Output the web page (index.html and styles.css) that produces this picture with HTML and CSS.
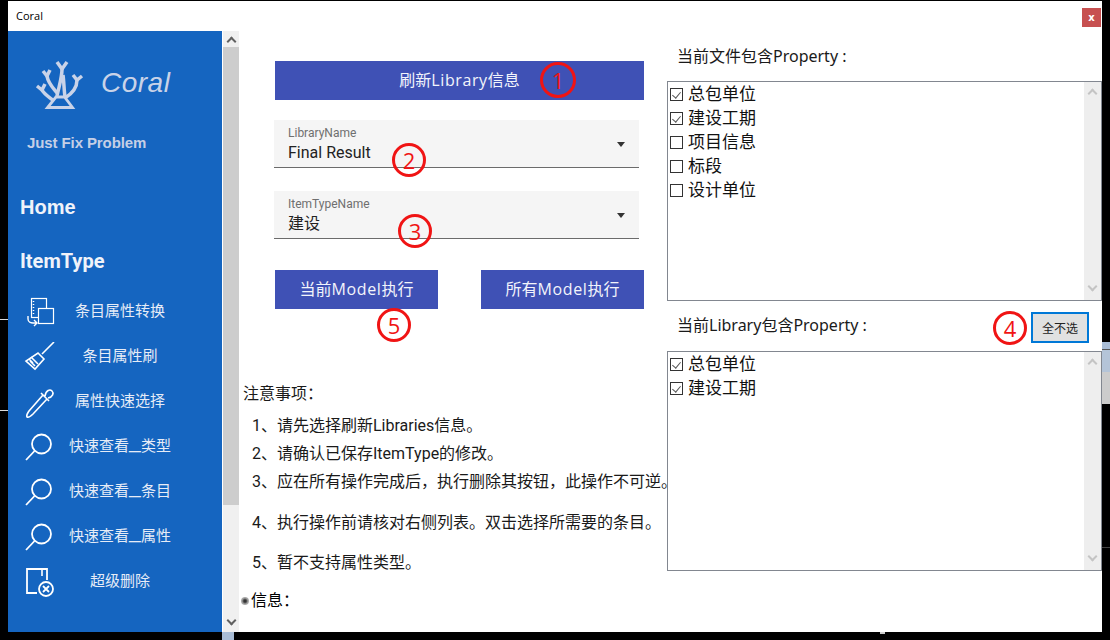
FILE: index.html
```html
<!doctype html>
<html lang="en">
<head>
	<meta charset="UTF-8">
	<title>Coral</title>
	<link rel="stylesheet" href="styles.css">
</head>
<body>
	<!-- bits of the desktop behind the window -->
	<div class="desk desk-line-a"></div>
	<div class="desk desk-line-b"></div>
	<div class="desk desk-line-c"></div>
	<div class="desk desk-panel"></div>
	<div class="desk desk-tab"></div>
	<div class="desk desk-dot"></div>

	<div class="window">
		<div class="titlebar">
			<span class="window-title">Coral</span>
			<button class="close-btn">x</button>
		</div>
		<div class="window-body">
			<!-- left menu -->
			<div class="sidebar">
				<div class="logo">
					<svg class="logo-icon" viewBox="0 0 50 50" fill="none" stroke="#c9d3e8" stroke-width="3.5">
						<path d="M22 2 27 9 32 2"/>
						<path d="M27 9C27 18 24 26 22 36"/>
						<path d="M28 15C29 22 29 30 30 37"/>
						<path d="M12.5 47.5H37.5L29.5 37H21Z" stroke-width="2.8"/>
						<path d="M8 11 12 16 15 10"/>
						<path d="M12 16C13 23 18 28 22 33"/>
						<path d="M2 26 7 30 10 24"/>
						<path d="M7 30C9 34 14 37 19 41"/>
						<path d="M38 15 42 20 47 16"/>
						<path d="M42 20C42 28 38 33 30 38"/>
					</svg>
					<span class="logo-text">Coral</span>
				</div>
				<div class="slogan">Just Fix Problem</div>
				<div class="nav-head nav-home">Home</div>
				<div class="nav-head nav-itemtype">ItemType</div>
				<ul class="nav-list">
					<li class="nav-item">
						<svg class="nav-icon" viewBox="0 0 32 32" fill="none" stroke="#fff" stroke-width="1.2">
							<rect x="8.5" y="1.5" width="15" height="19"/>
							<rect x="15.5" y="11.5" width="15" height="15" fill="#1565c0"/>
							<path d="M10.5 4v1M10.5 7v1M10.5 10v1M10.5 13v1M10.5 16v1" stroke-width="1.5"/>
							<path d="M5 19v3c0 3 3 4 5 4h4M11 23l3 3-3 3" stroke-width="1.4"/>
						</svg>
						<span class="nav-text">条目属性转换</span>
					</li>
					<li class="nav-item">
						<svg class="nav-icon" viewBox="0 0 32 32" fill="none" stroke="#fff" stroke-width="1.6">
							<path d="M31 0 19 12"/>
							<path d="M15 11 21 17 12 27 3 19Z"/>
							<path d="M8 15 15 22M12 24 7 19M6 17 10 21"/>
						</svg>
						<span class="nav-text">条目属性刷</span>
					</li>
					<li class="nav-item">
						<svg class="nav-icon" viewBox="0 0 32 32" fill="none" stroke="#fff" stroke-width="1.6">
							<path d="M20 8 6 24C4 27 3 28 4 30 6 31 8 29 10 27L24 12"/>
							<path d="M18 6 26 14M22 9C23 3 27 2 29 4 31 6 30 10 25 11"/>
						</svg>
						<span class="nav-text">属性快速选择</span>
					</li>
					<li class="nav-item">
						<svg class="nav-icon" viewBox="0 0 32 32" fill="none" stroke="#fff" stroke-width="1.8">
							<circle cx="18.5" cy="12" r="9.5"/>
							<path d="M11.5 19 3 28"/>
						</svg>
						<span class="nav-text">快速查看<span class="under">_</span>类型</span>
					</li>
					<li class="nav-item">
						<svg class="nav-icon" viewBox="0 0 32 32" fill="none" stroke="#fff" stroke-width="1.8">
							<circle cx="18.5" cy="12" r="9.5"/>
							<path d="M11.5 19 3 28"/>
						</svg>
						<span class="nav-text">快速查看<span class="under">_</span>条目</span>
					</li>
					<li class="nav-item">
						<svg class="nav-icon" viewBox="0 0 32 32" fill="none" stroke="#fff" stroke-width="1.8">
							<circle cx="18.5" cy="12" r="9.5"/>
							<path d="M11.5 19 3 28"/>
						</svg>
						<span class="nav-text">快速查看<span class="under">_</span>属性</span>
					</li>
					<li class="nav-item">
						<svg class="nav-icon" viewBox="0 0 32 32" fill="none" stroke="#fff" stroke-width="1.8">
							<path d="M14 26H4V2H24V13"/>
							<path d="M19 2V9" stroke-width="1.6"/>
							<circle cx="23" cy="22" r="7" fill="#1565c0"/>
							<path d="M20 19 26 25M26 19 20 25"/>
						</svg>
						<span class="nav-text">超级删除</span>
					</li>
				</ul>
			</div>

			<div class="scrollbar">
				<span class="arrow arrow-up"></span>
				<div class="thumb"></div>
				<span class="arrow arrow-down"></span>
			</div>

			<!-- actions -->
			<div class="main">
				<div class="actions">
					<button class="btn btn-refresh">刷新<span class="latin">Library</span>信息<span class="mark mark-1">1</span></button>
					<div class="select select-first">
						<div class="select-label">LibraryName</div>
						<div class="select-value">Final Result</div>
						<span class="select-caret"></span>
						<span class="mark mark-2">2</span>
					</div>
					<div class="select select-second">
						<div class="select-label">ItemTypeName</div>
						<div class="select-value">建设</div>
						<span class="select-caret"></span>
						<span class="mark mark-3">3</span>
					</div>
					<div class="btn-row">
						<button class="btn btn-run">当前<span class="latin">Model</span>执行<span class="mark mark-5">5</span></button>
						<button class="btn btn-run">所有<span class="latin">Model</span>执行</button>
					</div>
				</div>

				<div class="notes">
					<p class="notes-title">注意事项：</p>
					<p class="note note-1">1、请先选择刷新Libraries信息。</p>
					<p class="note note-2">2、请确认已保存ItemType的修改。</p>
					<p class="note note-3">3、应在所有操作完成后，执行删除其按钮，此操作不可逆。</p>
					<p class="note note-4">4、执行操作前请核对右侧列表。双击选择所需要的条目。</p>
					<p class="note note-5">5、暂不支持属性类型。</p>
					<p class="info"><span class="info-dot"></span>信息：</p>
				</div>
			</div>

			<!-- property lists -->
			<div class="props">
				<div class="props-head props-head-first">当前文件包含Property :</div>
				<div class="listbox">
					<ul class="check-list">
						<li><span class="check on"></span>总包单位</li>
						<li><span class="check on"></span>建设工期</li>
						<li><span class="check"></span>项目信息</li>
						<li><span class="check"></span>标段</li>
						<li><span class="check"></span>设计单位</li>
					</ul>
					<div class="list-scroll">
						<span class="arrow arrow-up arrow-light"></span>
						<span class="arrow arrow-down arrow-light"></span>
					</div>
				</div>
				<div class="props-head props-head-second">
					<span>当前Library包含Property :</span>
					<span class="mark mark-4">4</span>
					<button class="none-btn">全不选</button>
				</div>
				<div class="listbox">
					<ul class="check-list">
						<li><span class="check on"></span>总包单位</li>
						<li><span class="check on"></span>建设工期</li>
					</ul>
					<div class="list-scroll">
						<span class="arrow arrow-up arrow-light"></span>
						<span class="arrow arrow-down arrow-light"></span>
					</div>
				</div>
			</div>
		</div>
	</div>
</body>
</html>
```

FILE: styles.css
```css
*{
	padding: 0;
	margin: 0;
	box-sizing: border-box;
}
html, body{
	height: 640px;
	overflow: hidden;
}
body{
	background-color: #000;
	font-family: "Roboto", "Noto Sans CJK SC", sans-serif;
	color: #1a1a1a;
}
ul{
	list-style: none;
}

/* desktop showing around the window */
.desk{
	position: absolute;
}
.desk-line-a{
	left: 0;
	top: 319px;
	width: 8px;
	height: 1px;
	background-color: #ddd;
}
.desk-line-b{
	left: 0;
	top: 410px;
	width: 8px;
	height: 1px;
	background-color: #ddd;
}
.desk-line-c{
	left: 1102px;
	top: 547px;
	width: 8px;
	height: 1px;
	background-color: #444;
}
.desk-panel{
	left: 1102px;
	top: 342px;
	width: 8px;
	height: 62px;
	background: linear-gradient(#a9bdd6 0 7px, #555 7px 8px, #b4c4d8 8px 30px, #ccc 30px 100%);
}
.desk-tab{
	left: 222px;
	top: 632px;
	width: 12px;
	height: 8px;
	background-color: #a9bdd6;
}
.desk-dot{
	left: 880px;
	top: 632px;
	width: 5px;
	height: 2px;
	background-color: #ccc;
}

.window{
	position: relative;
	width: 1094px;
	height: 631px;
	margin: 1px 0 0 8px;
	background-color: #fff;
	display: flex;
	flex-direction: column;
}
.titlebar{
	height: 30px;
	display: flex;
	align-items: flex-start;
	justify-content: space-between;
}
.window-title{
	font-family: "Open Sans", sans-serif;
	font-size: 11px;
	color: #000;
	margin: 7px 0 0 8px;
}
.close-btn{
	width: 19px;
	height: 19px;
	margin: 7px 1px 0 0;
	border: none;
	background-color: #c75050;
	color: #fff;
	font-family: "DejaVu Sans", sans-serif;
	font-size: 10px;
	font-weight: bold;
}
.window-body{
	flex: 1;
	display: flex;
	min-height: 0;
}

/* sidebar */
.sidebar{
	width: 214px;
	background-color: #1565c0;
	margin-right: 1px;
	padding-left: 12px;
	flex-shrink: 0;
}
.logo{
	display: flex;
	align-items: center;
	margin: 29px 0 0 15px;
	height: 50px;
}
.logo-icon{
	width: 50px;
	height: 50px;
	flex-shrink: 0;
}
.logo-text{
	font-family: "Liberation Sans", sans-serif;
	font-style: italic;
	font-size: 28px;
	color: #c9d3e8;
	margin: -4px 0 0 16px;
	letter-spacing: 0.5px;
}
.slogan{
	font-family: "Liberation Sans", sans-serif;
	font-weight: bold;
	font-size: 15px;
	color: #c5cfe6;
	margin: 24px 0 0 7px;
	line-height: 18px;
	letter-spacing: -0.1px;
}
.nav-head{
	font-family: "Liberation Sans", sans-serif;
	font-weight: bold;
	font-size: 20px;
	line-height: 24px;
	color: #f0f3fa;
}
.nav-home{
	margin-top: 43px;
}
.nav-itemtype{
	font-family: "Roboto", sans-serif;
	margin-top: 30px;
}
.nav-list{
	margin-top: 14px;
}
.nav-item{
	display: grid;
	grid-template-columns: 40px 120px;
	align-items: center;
	height: 45px;
	font-size: 15px;
	color: #e6ecf7;
	text-align: center;
}
.nav-icon{
	width: 32px;
	height: 32px;
	margin: 6px 0 0 3px;
}
.under{
	display: inline-block;
	transform: scaleX(1.8);
	padding: 0 2.5px;
}

/* scrollbars */
.scrollbar{
	width: 16px;
	background-color: #f0f0f0;
	position: relative;
	flex-shrink: 0;
	display: flex;
	flex-direction: column;
	align-items: center;
	justify-content: space-between;
	padding: 5px 0 6px;
}
.thumb{
	position: absolute;
	left: 0;
	top: 16px;
	width: 16px;
	height: 458px;
	background-color: #cdcdcd;
}
.arrow{
	display: block;
	width: 7px;
	height: 7px;
	border-left: 2px solid #606060;
	border-top: 2px solid #606060;
	flex-shrink: 0;
}
.arrow-up{
	transform: translateY(2px) rotate(45deg);
}
.arrow-down{
	transform: translateY(-2px) rotate(225deg);
}
.arrow-light{
	border-color: #c4c4c4;
}

/* middle column */
.main{
	width: 428px;
	flex-shrink: 0;
}
.actions{
	padding: 30px 0 0 36px;
}
.btn{
	display: block;
	position: relative;
	border: none;
	background-color: #3f51b5;
	color: #f2f4fb;
	font-family: "Noto Sans CJK SC", sans-serif;
	font-size: 16px;
	height: 39px;
	padding-bottom: 4px;
}
.latin{
	font-family: "Open Sans", sans-serif;
	letter-spacing: 0.6px;
}
.btn-refresh{
	width: 369px;
}
.select{
	position: relative;
	width: 365px;
	margin-left: -1px;
	background-color: #f5f5f5;
	border-bottom: 1px solid #6b6b6b;
	padding: 7px 14px 0;
}
.select-first{
	height: 48px;
	margin-top: 20px;
}
.select-second{
	height: 48px;
	margin-top: 23px;
}
.select-label{
	font-size: 12px;
	line-height: 13px;
	color: #6f6f6f;
}
.select-value{
	font-size: 16px;
	line-height: 22px;
	margin-top: 2px;
	color: #222;
}
.select-caret{
	position: absolute;
	right: 14px;
	top: 22px;
	border-left: 4.5px solid transparent;
	border-right: 4.5px solid transparent;
	border-top: 5px solid #333;
}
.btn-row{
	display: flex;
	gap: 43px;
	margin-top: 31px;
}
.btn-run{
	width: 163px;
}

/* red hand drawn marks */
.mark{
	position: absolute;
	width: 34px;
	height: 34px;
	border: 3px solid #f01414;
	border-radius: 50%;
	color: #f01414;
	background: transparent;
	font-family: "Open Sans", sans-serif;
	font-size: 22px;
	line-height: 28px;
	letter-spacing: 0;
	text-align: center;
}
.mark-1{
	width: 36px;
	height: 36px;
	left: 265px;
	top: 1px;
	line-height: 30px;
}
.mark-2{
	left: 118px;
	top: 23px;
}
.mark-3{
	left: 124px;
	top: 23px;
}
.mark-5{
	left: 102px;
	top: 38px;
}
.mark-4{
	left: 326px;
	top: 10px;
}

/* notes */
.notes{
	font-size: 16px;
	line-height: 24px;
	padding-left: 4px;
	white-space: nowrap;
	margin-top: 73px;
}
.note{
	padding-left: 9px;
}
.note-1{
	margin-top: 8px;
}
.note-2, .note-3{
	margin-top: 4px;
}
.note-4{
	margin-top: 17px;
}
.note-5{
	margin-top: 16px;
}
.info{
	margin-top: 14px;
	display: flex;
	align-items: center;
	color: #000;
}
.info-dot{
	width: 8px;
	height: 8px;
	margin-left: -2px;
	margin-right: 2px;
	border-radius: 50%;
	background: radial-gradient(circle, #333 0 20%, #999 50%, #ddd 100%);
}

/* right column */
.props{
	width: 435px;
	flex-shrink: 0;
}
.props-head{
	position: relative;
	font-family: "Noto Sans", "Noto Sans CJK SC", sans-serif;
	font-size: 16px;
	color: #1a1a1a;
	padding-left: 10px;
	display: flex;
	align-items: center;
}
.props-head-first{
	height: 50px;
	padding-bottom: 2px;
}
.props-head-second{
	height: 50px;
	padding-bottom: 4px;
}
.none-btn{
	position: absolute;
	left: 364px;
	top: 11px;
	width: 58px;
	height: 31px;
	background-color: #e1e1e1;
	border: 2px solid #0078d7;
	color: #222;
	font-family: "Noto Sans CJK SC", sans-serif;
	font-size: 12px;
}
.listbox{
	height: 220px;
	border: 1px solid #828790;
	display: flex;
	justify-content: space-between;
}
.check-list{
	padding: 0 0 0 2px;
	font-size: 17px;
	line-height: 24px;
	color: #111;
}
.check-list li{
	display: flex;
	align-items: center;
}
.check{
	position: relative;
	width: 13px;
	height: 13px;
	border: 1px solid #333;
	margin-right: 5px;
}
.check.on::after{
	content: "";
	position: absolute;
	left: 3px;
	top: 1px;
	width: 4px;
	height: 7px;
	border-right: 1.5px solid #555;
	border-bottom: 1.5px solid #555;
	transform: rotate(40deg);
}
.list-scroll{
	width: 17px;
	background-color: #eee;
	display: flex;
	flex-direction: column;
	align-items: center;
	justify-content: space-between;
	padding: 6px 0 8px;
}
```
